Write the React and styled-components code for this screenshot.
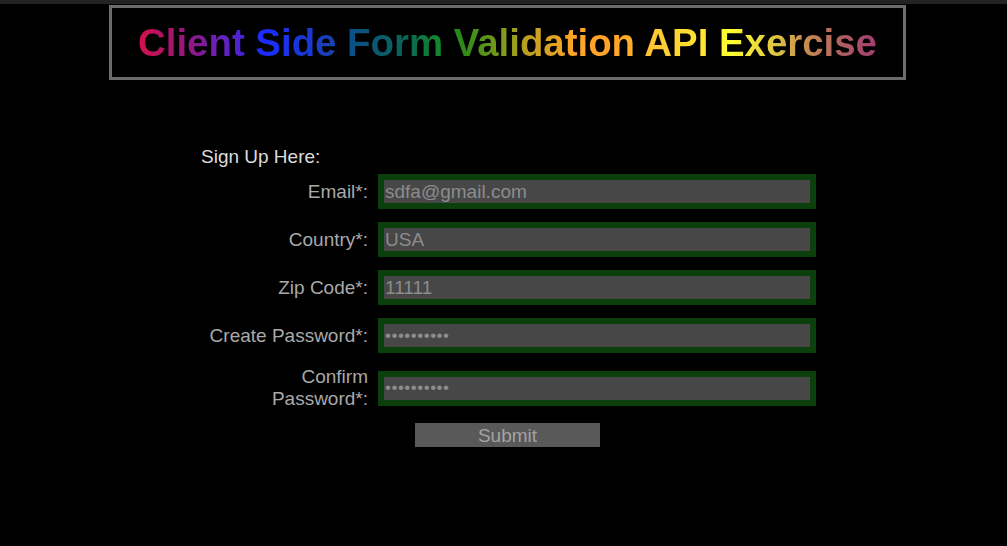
import React from 'react'
import styled, { createGlobalStyle } from 'styled-components'

const GlobalStyle = createGlobalStyle`
  html, body {
    margin : 0;
    background-color : #000;
  }
  body {
    border-top : 4px solid #232323;
    font-family : "Liberation Sans", Arial, Helvetica, sans-serif;
    min-height : 542px;
  }
`

const Header = styled.header`
  box-sizing : border-box;
  width : 797px;
  height : 75px;
  margin : 1px 0 0 109px;
  border : 3px solid #6b6c6e;
  display : flex;
  align-items : center;
  justify-content : center;
`

const Title = styled.h1`
  margin : 0;
  padding-top : 1px;
  font-size : 38.4px;
  font-weight : bold;
  line-height : 44px;
  background : linear-gradient(
    to right,
    #d4104c 0%,
    #9a1678 6%,
    #6a20b8 11%,
    #4a22d8 14%,
    #1a2cff 17%,
    #1a38d4 23%,
    #1a40b0 26%,
    #0a5088 29%,
    #0a6458 36%,
    #128a2c 41%,
    #2e8a1a 44%,
    #7a9a1a 49%,
    #c0a020 53%,
    #ffa428 59%,
    #ffa428 65%,
    #ffc832 70%,
    #ffe830 77%,
    #ffff30 80%,
    #e0c840 86%,
    #c89050 90%,
    #b06060 95%,
    #a03c70 100%
  );
  -webkit-background-clip : text;
  background-clip : text;
  color : transparent;
`

const Form = styled.form`
  margin : 66px 0 0 201px;
  display : flex;
  flex-direction : column;
  font-size : 19px;
`

const Heading = styled.div`
  color : #dcdcdc;
  line-height : 22px;
  margin-bottom : 6px;
`

const Rows = styled.div`
  display : flex;
  flex-direction : column;
  gap : 13px;
`

const Row = styled.div`
  display : grid;
  grid-template-columns : 167px 438px;
  column-gap : 10px;
  align-items : center;
`

const Label = styled.label`
  box-sizing : border-box;
  padding-left : 7px;
  text-align : right;
  color : #a9a9a9;
  line-height : 22px;
`

const Input = styled.input`
  box-sizing : border-box;
  width : 438px;
  height : 35px;
  margin : 0;
  padding : 0 1px;
  border : 6px solid #0b3f0c;
  background-color : #474747;
  color : #8c8c8c;
  font-family : inherit;
  font-size : 19px;
  outline : none;
  &[type="password"] {
    font-size : 17px;
    letter-spacing : 0.5px;
  }
`

const Submit = styled.button`
  width : 185px;
  height : 24px;
  margin : 13px 0 0 214px;
  padding : 1px 0 0;
  border : none;
  background-color : #595959;
  color : #a3a3a3;
  font-family : inherit;
  font-size : 19px;
  line-height : 23px;
`

const fields = [
  { id : 'email', label : 'Email*:', type : 'email', value : 'sdfa@gmail.com' },
  { id : 'country', label : 'Country*:', type : 'text', value : 'USA' },
  { id : 'zip', label : 'Zip Code*:', type : 'text', value : '11111' },
  { id : 'password', label : 'Create Password*:', type : 'password', value : 'abcdefghij' },
  { id : 'confirm', label : 'Confirm Password*:', type : 'password', value : 'abcdefghij' },
]

export default function App() {
  return (
    <>
      <GlobalStyle />
      <Header>
        <Title>Client Side Form Validation API Exercise</Title>
      </Header>
      <Form noValidate onSubmit={(e) => e.preventDefault()}>
        <Heading>Sign Up Here:</Heading>
        <Rows>
          {fields.map((field) =>
            <Row key={field.id}>
              <Label htmlFor={field.id}>{field.label}</Label>
              <Input id={field.id} type={field.type} defaultValue={field.value} />
            </Row>
          )}
        </Rows>
        <div>
          <Submit type="submit">Submit</Submit>
        </div>
      </Form>
    </>
  )
}
